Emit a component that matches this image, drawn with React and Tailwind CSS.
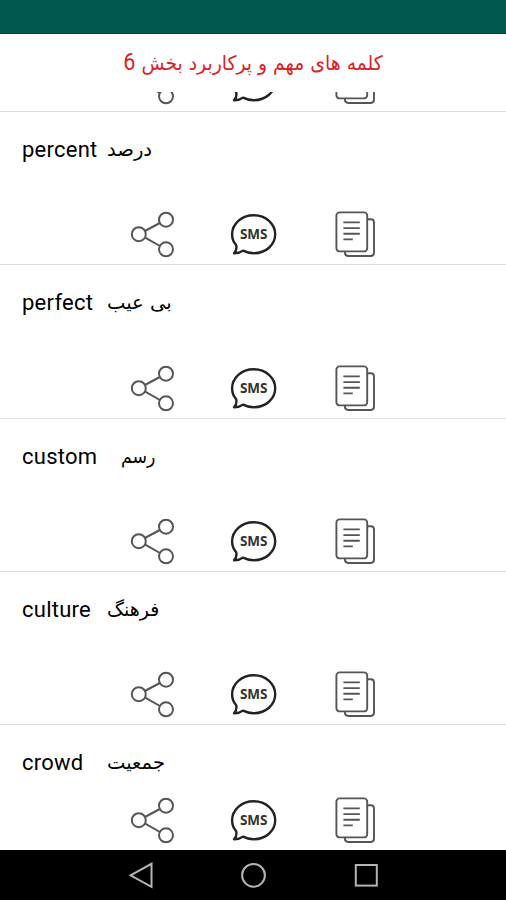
const words = [
  { en: "percent", fa: "درصد", enWidth: "w-[85px]", faWidth: "scale-x-[1.03]" },
  { en: "perfect", fa: "بی عیب", enWidth: "w-[85px]", faWidth: "scale-x-[1.03]" },
  { en: "custom", fa: "رسم", enWidth: "w-[99px]", faWidth: "scale-x-[0.91]" },
  { en: "culture", fa: "فرهنگ", enWidth: "w-[85px]", faWidth: "scale-x-100" },
  { en: "crowd", fa: "جمعیت", enWidth: "w-[85px]", faWidth: "scale-x-[1.03]" },
];

function ShareIcon() {
  return (
    <svg width="50" height="50" viewBox="0 0 50 50" fill="none" stroke="#555" strokeWidth="2">
      <path d="M16.8 22L31.9 14M16.8 28.4L31.9 37" />
      <circle cx="10.8" cy="25.2" r="7" />
      <circle cx="38" cy="10.7" r="7" />
      <circle cx="38" cy="40.3" r="7" />
    </svg>
  );
}

function SmsIcon({ label = true }) {
  return (
    <svg width="50" height="50" viewBox="0 0 50 50">
      <path
        d="M7.2 36.2C4.4 33.2 3.1 29.5 3.1 25.3C3.1 14.7 12.6 6.3 24.7 6.3C36.8 6.3 46.2 14.7 46.2 25.3C46.2 35.9 36.8 44.2 24.7 44.2C20.8 44.2 17.3 43.3 14 41.6C11.5 43.5 8.6 44.4 5 44.3C7.2 42 7.9 39.3 7.2 36.2Z"
        fill="none"
        stroke="#222"
        strokeWidth="2.4"
        strokeLinejoin="round"
      />
      {label && (
        <text
          x="11"
          y="30"
          textLength="27.4"
          className="font-['Noto_Sans',sans-serif] text-[13.5px] font-bold"
          fill="#333"
        >
          SMS
        </text>
      )}
    </svg>
  );
}

function CopyIcon() {
  return (
    <svg width="50" height="50" viewBox="0 0 50 50" fill="none" stroke="#555" strokeWidth="1.9">
      <path d="M37.5 10.2H40.8Q44 10.2 44 13.6V43.6Q44 47 40.8 47H18.3Q14.9 47 14.9 43.6V42.6" />
      <rect x="6.4" y="3.4" width="30.8" height="39" rx="3.2" />
      <path d="M13.4 13.4H29.8M13.4 19.1H29.8M13.4 24.7H29.8M13.4 30.4H22.8" />
    </svg>
  );
}

function Actions({ smsLabel }) {
  return (
    <div className="flex shrink-0 gap-[51px] pl-32">
      <ShareIcon />
      <SmsIcon label={smsLabel} />
      <CopyIcon />
    </div>
  );
}

function WordRow({ word, last }) {
  return (
    <li
      className={`flex shrink-0 flex-col justify-between ${
        last ? "h-[125px] pb-[5px]" : "h-[153.25px] border-b border-[#dedede] pb-[5px]"
      }`}
    >
      <div className="flex pt-[22px] pl-[22px] text-[22px] leading-8 text-black">
        <span className={`shrink-0 tracking-[0.25px] ${word.enWidth}`}>{word.en}</span>
        <span
          dir="rtl"
          className={`-mt-px origin-left font-['DejaVu_Sans',sans-serif] text-[19px] ${word.faWidth}`}
        >
          {word.fa}
        </span>
      </div>
      <Actions />
    </li>
  );
}

function NavBar() {
  return (
    <nav className="flex h-[50px] shrink-0 items-center justify-center gap-[86px] bg-black">
      <svg width="27" height="30" viewBox="0 0 27 30" fill="none" stroke="#b5b5b5" strokeWidth="2">
        <path d="M3.5 15.3L24.5 3.8V26.8Z" />
      </svg>
      <svg width="27" height="30" viewBox="0 0 27 30" fill="none" stroke="#b5b5b5" strokeWidth="2">
        <circle cx="13.5" cy="15.3" r="11.4" />
      </svg>
      <svg width="27" height="30" viewBox="0 0 27 30" fill="none" stroke="#b5b5b5" strokeWidth="2">
        <rect x="2.8" y="5" width="21" height="20.6" />
      </svg>
    </nav>
  );
}

export default function App() {
  return (
    <div className="flex h-[900px] w-[506px] flex-col overflow-hidden bg-white font-[Roboto,sans-serif]">
      {/* Status bar */}
      <div className="h-[34px] shrink-0 border-b border-[#00463c] bg-[#00594c]"></div>

      <header className="flex h-[58px] shrink-0 items-center justify-center">
        <h1
          dir="rtl"
          className="scale-x-[0.94] font-['DejaVu_Sans',sans-serif] text-[20px] text-[#dc1f26]"
        >
          کلمه های مهم و پرکاربرد بخش <span className="font-[Roboto,sans-serif] text-[23px]">6</span>
        </h1>
      </header>

      <ul className="flex min-h-0 flex-1 flex-col overflow-hidden">
        {/* Row scrolled under the title */}
        <li className="flex h-5 shrink-0 flex-col justify-end overflow-hidden border-b border-[#dedede] pb-[5px]">
          <Actions smsLabel={false} />
        </li>
        {words.map((word, i) => (
          <WordRow key={word.en} word={word} last={i === words.length - 1} />
        ))}
      </ul>

      <NavBar />
    </div>
  );
}
